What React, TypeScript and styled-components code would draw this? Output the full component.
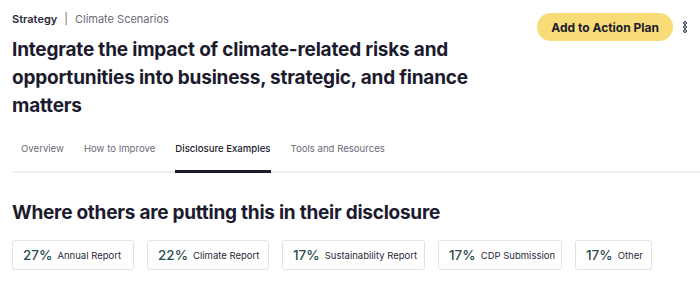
import React from "react";
import styled, { createGlobalStyle } from "styled-components";

const Global = createGlobalStyle`
  body { margin: 0; background: #fff; font-family: Inter, "Noto Sans", sans-serif; color: #1c1b2e; }
`;

const Page = styled.div`
  padding: 12px 0 0 12px;
  width: 700px;
  box-sizing: border-box;
`;

const Header = styled.div`
  display: flex;
  justify-content: space-between;
  align-items: flex-start;
`;

const TitleBlock = styled.div`
  display: flex;
  flex-direction: column;
`;

const Crumbs = styled.div`
  font-size: 11px;
  line-height: 14px;
  color: #6b6a78;
  display: flex;
  gap: 7px;
`;

const CrumbStrong = styled.span`
  font-weight: 600;
  color: #2a2938;
`;

const Title = styled.h1`
  margin: 10px 0 0;
  font-size: 19px;
  line-height: 28px;
  font-weight: 700;
  letter-spacing: -0.2px;
  width: 480px;
  color: #1c1b2e;
`;

const Actions = styled.div`
  display: flex;
  align-items: center;
  gap: 9px;
  margin-top: 1px;
  padding-right: 12px;
`;

const PrimaryButton = styled.button`
  background: #f7dc78;
  border: none;
  border-radius: 14px;
  height: 28px;
  padding: 0 14px;
  font-family: inherit;
  font-size: 12px;
  font-weight: 700;
  color: #1c1b2e;
`;

const Tabs = styled.div`
  margin-top: 16px;
  display: flex;
  gap: 20px;
  padding-left: 9px;
  border-bottom: 2px solid #eeeef0;
`;

const Tab = styled.div<{ $active?: boolean }>`
  font-size: 9.6px;
  line-height: 14px;
  padding: 6px 0 14px;
  color: ${(p) => (p.$active ? "#1c1b2e" : "#6b6a78")};
  font-weight: ${(p) => (p.$active ? 500 : 400)};
  border-bottom: 3px solid ${(p) => (p.$active ? "#1c1b2e" : "transparent")};
  margin-bottom: -2px;
`;

const SectionTitle = styled.h2`
  margin: 28px 0 0;
  font-size: 19px;
  line-height: 24px;
  font-weight: 700;
  letter-spacing: -0.25px;
`;

const Cards = styled.div`
  display: flex;
  gap: 13px;
  margin-top: 15px;
`;

const Card = styled.div`
  height: 30px;
  box-sizing: border-box;
  border: 1px solid #e3e3e7;
  border-radius: 3px;
  display: flex;
  align-items: center;
  gap: 5px;
  padding: 0 10px;
  white-space: nowrap;
`;

const Pct = styled.span`
  font-size: 13.5px;
  color: #2d4b4c;
  font-weight: 500;
`;

const Label = styled.span`
  font-size: 9.5px;
  color: #2a2938;
`;

const Kebab = () => (
  <svg width="6" height="12" viewBox="0 0 6 12" fill="none" stroke="#1c1b2e" strokeWidth="1">
    <circle cx="3" cy="2" r="1.4" />
    <circle cx="3" cy="6" r="1.4" />
    <circle cx="3" cy="10" r="1.4" />
  </svg>
);

const data = [
  { p: "27%", l: "Annual Report", w: 122 },
  { p: "22%", l: "Climate Report", w: 122 },
  { p: "17%", l: "Sustainability Report", w: 143 },
  { p: "17%", l: "CDP Submission", w: 124 },
  { p: "17%", l: "Other", w: 77 },
];

export default function App() {
  return (
    <Page>
      <Global />
      <Header>
        <TitleBlock>
          <Crumbs>
            <CrumbStrong>Strategy</CrumbStrong>
            <span>|</span>
            <span>Climate Scenarios</span>
          </Crumbs>
          <Title>Integrate the impact of climate-related risks and opportunities into business, strategic, and finance matters</Title>
        </TitleBlock>
        <Actions>
          <PrimaryButton>Add to Action Plan</PrimaryButton>
          <Kebab />
        </Actions>
      </Header>
      <Tabs>
        <Tab>Overview</Tab>
        <Tab>How to Improve</Tab>
        <Tab $active>Disclosure Examples</Tab>
        <Tab>Tools and Resources</Tab>
      </Tabs>
      <SectionTitle>Where others are putting this in their disclosure</SectionTitle>
      <Cards>
        {data.map((d) => (
          <Card key={d.l} style={{ width: d.w }}>
            <Pct>{d.p}</Pct>
            <Label>{d.l}</Label>
          </Card>
        ))}
      </Cards>
    </Page>
  );
}
